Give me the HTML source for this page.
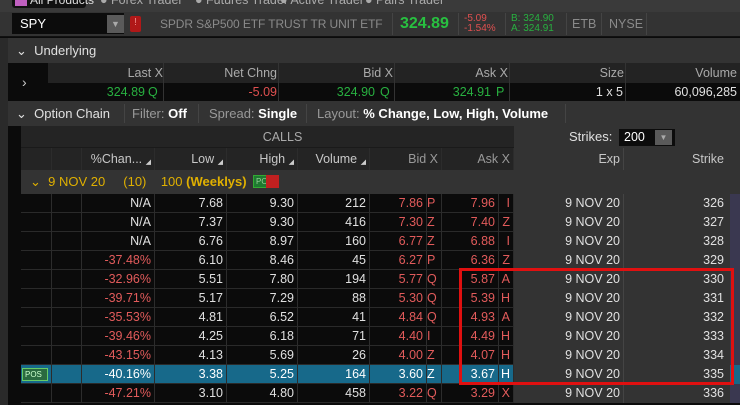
<!DOCTYPE html>
<html><head><meta charset="utf-8"><style>
*{margin:0;padding:0;box-sizing:border-box}
body{width:740px;height:405px;overflow:hidden;background:#0b0b0b;font-family:"Liberation Sans",sans-serif;font-size:12.5px;color:#e0e0e0;position:relative}
.a{position:absolute;white-space:nowrap}
.row{position:absolute;left:21px;height:19px;display:flex;width:719px}
.row div{height:19px;line-height:19px;text-align:right;padding-right:3px;border-right:1px solid #2c2c2c;border-bottom:1px solid #2a2a2a;white-space:nowrap}
.c1{width:31px}.c2{width:30px}.c3{width:73px}.c4{width:72px}.c5{width:71px}.c6{width:72px}.c7{width:57px}.c8{width:15px;text-align:left!important;padding-left:0!important}.c9{width:57px}.c10{width:15px}.c11{width:110px;background:#333;border-right:1px solid #444!important;border-bottom:none!important}.c12{width:106px;background:#333;border:none!important;padding-right:6px!important}.c13{width:10px;background:#3a3850;border:none!important}
.r{color:#e25b5b}
.hl div{background:#17698a;color:#fff}
.hl .c11,.hl .c12{background:#333;color:#e0e0e0}
.hdr div{color:#c8c8c8;background:#242424;height:22px;line-height:22px;border-bottom:none}
.t{font-size:7px;color:#ccc;vertical-align:-1px}
</style></head><body>
<!-- top tabs -->
<div class="a" style="left:0;top:0;width:740px;height:12px;background:#3a3a3a"></div>
<div class="a" style="left:12px;top:-6px;width:74px;height:14px;background:#111;border-radius:3px;color:#ddd;font-size:12px;line-height:12px;padding-left:18px">All Products</div>
<div class="a" style="left:15px;top:-4px;width:12px;height:10px;background:#c060c0"></div>
<div class="a" style="left:100px;top:-6px;color:#aaa;line-height:12px">&#9679; Forex Trader</div>
<div class="a" style="left:195px;top:-6px;color:#aaa;line-height:12px">&#9679; Futures Trader</div>
<div class="a" style="left:280px;top:-6px;color:#aaa;line-height:12px">&#9679; Active Trader</div>
<div class="a" style="left:365px;top:-6px;color:#aaa;line-height:12px">&#9679; Pairs Trader</div>
<!-- symbol row -->
<div class="a" style="left:0;top:12px;width:740px;height:25px;background:#333;border-bottom:1px solid #111"></div>
<div class="a" style="left:12px;top:13px;width:112px;height:21px;background:#0c0c0c;color:#fff;padding-left:8px;line-height:21px;font-size:13px">SPY</div>
<div class="a" style="left:107px;top:15px;width:17px;height:18px;background:#5a5a5a;color:#aaa;font-size:9px;text-align:center;line-height:18px">&#9660;</div>
<div class="a" style="left:130px;top:16px;width:11px;height:16px;background:#b01818;border-radius:2px;font-size:10px;text-align:center;line-height:14px;color:#e88">!</div>
<div class="a" style="left:160px;top:13px;line-height:22px;color:#8a8a8a;font-size:12px;letter-spacing:-0.1px">SPDR S&amp;P500 ETF TRUST TR UNIT ETF</div>
<div class="a" style="left:392px;top:13px;width:1px;height:22px;background:#444"></div>
<div class="a" style="left:400px;top:13px;line-height:22px;color:#28c040;font-weight:bold;font-size:16px">324.89</div>
<div class="a" style="left:458px;top:13px;width:1px;height:22px;background:#444"></div>
<div class="a" style="left:464px;top:14px;line-height:10px;color:#e05050;font-size:10px">-5.09<br>-1.54%</div>
<div class="a" style="left:505px;top:13px;width:1px;height:22px;background:#444"></div>
<div class="a" style="left:511px;top:14px;line-height:10px;color:#28b040;font-size:10px">B: 324.90<br>A: 324.91</div>
<div class="a" style="left:566px;top:13px;width:1px;height:22px;background:#444"></div>
<div class="a" style="left:572px;top:13px;line-height:22px;color:#8a8a8a">ETB</div>
<div class="a" style="left:601px;top:13px;width:1px;height:22px;background:#444"></div>
<div class="a" style="left:609px;top:13px;line-height:22px;color:#8a8a8a">NYSE</div>
<div class="a" style="left:646px;top:13px;width:1px;height:22px;background:#444"></div>
<!-- underlying -->
<div class="a" style="left:8px;top:38px;width:732px;height:25px;background:#333;line-height:25px;font-size:13px;padding-left:8px">&#8964;&nbsp; Underlying</div>
<div class="a" style="left:0;top:38px;width:8px;height:367px;background:#2a2a2a"></div>
<div class="a" style="left:8px;top:63px;width:40px;height:38px;background:#0b0b0b;color:#ccc;font-size:14px;line-height:38px;padding-left:14px">&#8250;</div>
<div class="a" style="left:48px;top:63px;width:692px;height:20px;background:#232323"></div>
<div class="a" style="left:48px;top:83px;width:692px;height:18px;background:#0b0b0b"></div>
<div class="a" style="left:48px;top:63px;width:115px;text-align:right;line-height:20px;color:#aaa">Last X</div>
<div class="a" style="left:163px;top:63px;width:1px;height:38px;background:#333"></div>
<div class="a" style="left:163px;top:63px;width:114px;text-align:right;line-height:20px;color:#aaa">Net Chng</div>
<div class="a" style="left:278px;top:63px;width:1px;height:38px;background:#333"></div>
<div class="a" style="left:278px;top:63px;width:115px;text-align:right;line-height:20px;color:#aaa">Bid X</div>
<div class="a" style="left:394px;top:63px;width:1px;height:38px;background:#333"></div>
<div class="a" style="left:394px;top:63px;width:114px;text-align:right;line-height:20px;color:#aaa">Ask X</div>
<div class="a" style="left:509px;top:63px;width:1px;height:38px;background:#333"></div>
<div class="a" style="left:509px;top:63px;width:115px;text-align:right;line-height:20px;color:#aaa">Size</div>
<div class="a" style="left:625px;top:63px;width:1px;height:38px;background:#333"></div>
<div class="a" style="left:625px;top:63px;width:112px;text-align:right;line-height:20px;color:#aaa">Volume</div>
<div class="a" style="left:48px;top:83px;width:97px;text-align:right;line-height:18px;color:#28b040">324.89</div>
<div class="a" style="left:148px;top:83px;width:13px;line-height:18px;color:#28b040">Q</div>
<div class="a" style="left:163px;top:83px;width:114px;text-align:right;line-height:18px;color:#e05050">-5.09</div>
<div class="a" style="left:278px;top:83px;width:97px;text-align:right;line-height:18px;color:#28b040">324.90</div>
<div class="a" style="left:380px;top:83px;line-height:18px;color:#28b040">Q</div>
<div class="a" style="left:394px;top:83px;width:97px;text-align:right;line-height:18px;color:#28b040">324.91</div>
<div class="a" style="left:496px;top:83px;line-height:18px;color:#28b040">P</div>
<div class="a" style="left:509px;top:83px;width:114px;text-align:right;line-height:18px">1 x 5</div>
<div class="a" style="left:625px;top:83px;width:112px;text-align:right;line-height:18px">60,096,285</div>
<!-- option chain bar -->
<div class="a" style="left:8px;top:101px;width:732px;height:25px;background:#333;line-height:25px;font-size:13px;padding-left:8px">&#8964;&nbsp; Option Chain</div>
<div class="a" style="left:124px;top:104px;width:1px;height:19px;background:#444"></div>
<div class="a" style="left:132px;top:101px;line-height:25px;font-size:13px;color:#999">Filter: <b style="color:#fff">Off</b></div>
<div class="a" style="left:198px;top:104px;width:1px;height:19px;background:#444"></div>
<div class="a" style="left:209px;top:101px;line-height:25px;font-size:13px;color:#999">Spread: <b style="color:#fff">Single</b></div>
<div class="a" style="left:306px;top:104px;width:1px;height:19px;background:#444"></div>
<div class="a" style="left:317px;top:101px;line-height:25px;font-size:13px;color:#999">Layout: <b style="color:#fff">% Change, Low, High, Volume</b></div>
<div class="a" style="left:565px;top:104px;width:1px;height:19px;background:#444"></div>
<!-- calls header -->
<div class="a" style="left:21px;top:126px;width:493px;height:22px;background:#242424;border-bottom:1px solid #1a1a1a;text-align:center;line-height:22px;color:#aaa;padding-left:30px">CALLS</div>
<div class="a" style="left:514px;top:126px;width:226px;height:22px;background:#333"></div>
<div class="a" style="left:569px;top:126px;line-height:22px;color:#e0e0e0;font-size:13px">Strikes:</div>
<div class="a" style="left:619px;top:129px;width:56px;height:17px;background:#0c0c0c;color:#fff;line-height:17px;padding-left:5px">200</div>
<div class="a" style="left:655px;top:130px;width:17px;height:15px;background:#5a5a5a;color:#aaa;font-size:8px;text-align:center;line-height:15px">&#9660;</div>
<div class="a" style="left:8px;top:126px;width:13px;height:279px;background:#0b0b0b"></div>
<div class="row hdr" style="top:148px;height:22px">
<div class="c1"></div><div class="c2"></div><div class="c3">%Chan... <span class="t">&#9698;</span></div><div class="c4">Low <span class="t">&#9698;</span></div><div class="c5">High <span class="t">&#9698;</span></div><div class="c6">Volume <span class="t">&#9698;</span></div><div class="c7" style="width:72px;color:#999">Bid X</div><div class="c9" style="width:72px;color:#999">Ask X</div><div class="c11" style="background:#333">Exp</div><div class="c12" style="background:#333">Strike</div><div class="c13" style="background:#333"></div>
</div>
<div class="a" style="left:21px;top:170px;width:719px;height:24px;background:#333"></div>
<div class="a" style="left:30px;top:170px;line-height:24px;color:#e0b000;font-size:13px">&#8964;&nbsp; 9 NOV 20 &nbsp;&nbsp;&nbsp; (10) &nbsp;&nbsp; 100 <b>(Weeklys)</b></div>
<div class="a" style="left:253px;top:175px;width:26px;height:13px;background:#1e7a30;border:1px solid #3a3;font-size:8px;line-height:11px;color:#9c9;padding-left:2px">POS</div>
<div class="a" style="left:266px;top:175px;width:13px;height:13px;background:#c02020"></div>
<div class="row" style="top:194px"><div class="c1"></div><div class="c2"></div><div class="c3">N/A</div><div class="c4">7.68</div><div class="c5">9.30</div><div class="c6">212</div><div class="c7 r">7.86</div><div class="c8 r">P</div><div class="c9 r">7.96</div><div class="c10 r">I</div><div class="c11">9 NOV 20</div><div class="c12">326</div><div class="c13"></div></div>
<div class="row" style="top:213px"><div class="c1"></div><div class="c2"></div><div class="c3">N/A</div><div class="c4">7.37</div><div class="c5">9.30</div><div class="c6">416</div><div class="c7 r">7.30</div><div class="c8 r">Z</div><div class="c9 r">7.40</div><div class="c10 r">Z</div><div class="c11">9 NOV 20</div><div class="c12">327</div><div class="c13"></div></div>
<div class="row" style="top:232px"><div class="c1"></div><div class="c2"></div><div class="c3">N/A</div><div class="c4">6.76</div><div class="c5">8.97</div><div class="c6">160</div><div class="c7 r">6.77</div><div class="c8 r">Z</div><div class="c9 r">6.88</div><div class="c10 r">I</div><div class="c11">9 NOV 20</div><div class="c12">328</div><div class="c13"></div></div>
<div class="row" style="top:251px"><div class="c1"></div><div class="c2"></div><div class="c3 r">-37.48%</div><div class="c4">6.10</div><div class="c5">8.46</div><div class="c6">45</div><div class="c7 r">6.27</div><div class="c8 r">P</div><div class="c9 r">6.36</div><div class="c10 r">Z</div><div class="c11">9 NOV 20</div><div class="c12">329</div><div class="c13"></div></div>
<div class="row" style="top:270px"><div class="c1"></div><div class="c2"></div><div class="c3 r">-32.96%</div><div class="c4">5.51</div><div class="c5">7.80</div><div class="c6">194</div><div class="c7 r">5.77</div><div class="c8 r">Q</div><div class="c9 r">5.87</div><div class="c10 r">A</div><div class="c11">9 NOV 20</div><div class="c12">330</div><div class="c13"></div></div>
<div class="row" style="top:289px"><div class="c1"></div><div class="c2"></div><div class="c3 r">-39.71%</div><div class="c4">5.17</div><div class="c5">7.29</div><div class="c6">88</div><div class="c7 r">5.30</div><div class="c8 r">Q</div><div class="c9 r">5.39</div><div class="c10 r">H</div><div class="c11">9 NOV 20</div><div class="c12">331</div><div class="c13"></div></div>
<div class="row" style="top:308px"><div class="c1"></div><div class="c2"></div><div class="c3 r">-35.53%</div><div class="c4">4.81</div><div class="c5">6.52</div><div class="c6">41</div><div class="c7 r">4.84</div><div class="c8 r">Q</div><div class="c9 r">4.93</div><div class="c10 r">A</div><div class="c11">9 NOV 20</div><div class="c12">332</div><div class="c13"></div></div>
<div class="row" style="top:327px"><div class="c1"></div><div class="c2"></div><div class="c3 r">-39.46%</div><div class="c4">4.25</div><div class="c5">6.18</div><div class="c6">71</div><div class="c7 r">4.40</div><div class="c8 r">I</div><div class="c9 r">4.49</div><div class="c10 r">H</div><div class="c11">9 NOV 20</div><div class="c12">333</div><div class="c13"></div></div>
<div class="row" style="top:346px"><div class="c1"></div><div class="c2"></div><div class="c3 r">-43.15%</div><div class="c4">4.13</div><div class="c5">5.69</div><div class="c6">26</div><div class="c7 r">4.00</div><div class="c8 r">Z</div><div class="c9 r">4.07</div><div class="c10 r">H</div><div class="c11">9 NOV 20</div><div class="c12">334</div><div class="c13"></div></div>
<div class="row hl" style="top:365px"><div class="c1"></div><div class="c2"></div><div class="c3">-40.16%</div><div class="c4">3.38</div><div class="c5">5.25</div><div class="c6">164</div><div class="c7">3.60</div><div class="c8">Z</div><div class="c9">3.67</div><div class="c10">H</div><div class="c11">9 NOV 20</div><div class="c12">335</div><div class="c13"></div></div>
<div class="row" style="top:384px"><div class="c1"></div><div class="c2"></div><div class="c3 r">-47.21%</div><div class="c4">3.10</div><div class="c5">4.80</div><div class="c6">458</div><div class="c7 r">3.22</div><div class="c8 r">Q</div><div class="c9 r">3.29</div><div class="c10 r">X</div><div class="c11">9 NOV 20</div><div class="c12">336</div><div class="c13"></div></div>
<div class="a" style="left:22px;top:368px;width:26px;height:13px;background:#2a6a40;border:1px solid #6c6;font-size:8px;line-height:11px;color:#cfc;padding-left:2px">POS</div>
<!-- red box -->
<div class="a" style="left:459px;top:268px;width:275px;height:117px;border:3px solid #e01010"></div>
</body></html>
